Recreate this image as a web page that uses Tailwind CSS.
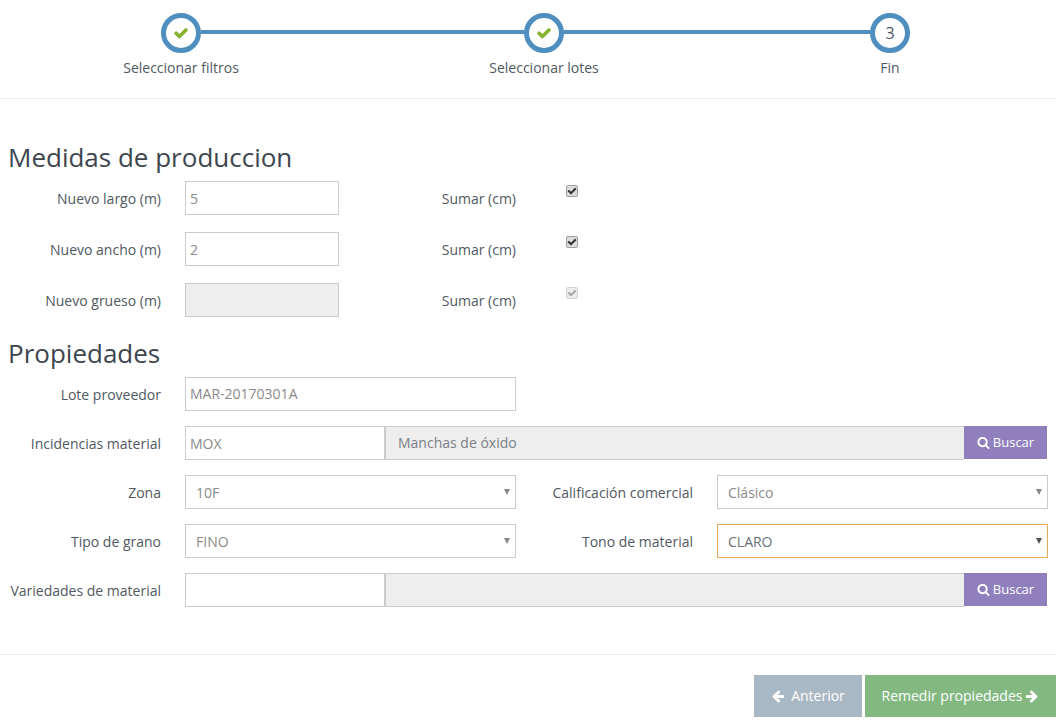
<!DOCTYPE html>
<html lang="es">
<head>
    <meta charset="UTF-8">
    <title>Remedir propiedades</title>
    <script src="https://cdn.jsdelivr.net/npm/@tailwindcss/browser@4"></script>
</head>
<body class="bg-white font-['Open_Sans',sans-serif] text-[14px] text-[#4f5962] overflow-hidden">
<div class="w-[1056px]">

    <!-- Stepper -->
    <div class="h-[99px] border-b border-[#eeeeee] flex items-start pl-[161px] pr-[146px] pt-[13px]">
        <div class="w-10 flex flex-col items-center shrink-0">
            <div class="w-10 h-10 rounded-full border-[5px] border-[#4f8fc0] flex items-center justify-center">
                <svg class="w-4 h-4" viewBox="0 0 1792 1792" fill="#85b22f"><path d="M1671 566q0 40-28 68l-724 724-136 136q-28 28-68 28t-68-28l-136-136-362-362q-28-28-28-68t28-68l136-136q28-28 68-28t68 28l294 295 656-657q28-28 68-28t68 28l136 136q28 28 28 68z"/></svg>
            </div>
            <span class="whitespace-nowrap mt-[5px] leading-[20px]">Seleccionar filtros</span>
        </div>
        <div class="w-[323px] h-1 bg-[#4f8fc0] mt-[17px]"></div>
        <div class="w-10 flex flex-col items-center shrink-0">
            <div class="w-10 h-10 rounded-full border-[5px] border-[#4f8fc0] flex items-center justify-center">
                <svg class="w-4 h-4" viewBox="0 0 1792 1792" fill="#85b22f"><path d="M1671 566q0 40-28 68l-724 724-136 136q-28 28-68 28t-68-28l-136-136-362-362q-28-28-28-68t28-68l136-136q28-28 68-28t68 28l294 295 656-657q28-28 68-28t68 28l136 136q28 28 28 68z"/></svg>
            </div>
            <span class="whitespace-nowrap mt-[5px] leading-[20px]">Seleccionar lotes</span>
        </div>
        <div class="flex-1 h-1 bg-[#4f8fc0] mt-[17px]"></div>
        <div class="w-10 flex flex-col items-center shrink-0">
            <div class="w-10 h-10 rounded-full border-[5px] border-[#4f8fc0] flex items-center justify-center text-[16px]">3</div>
            <span class="whitespace-nowrap mt-[5px] leading-[20px]">Fin</span>
        </div>
    </div>

    <!-- Form -->
    <div class="pt-[42px]">
        <h2 class="pl-2 text-[26px] leading-[33px] text-[#3d464e] mb-[7px]">Medidas de produccion</h2>

        <div class="flex items-start h-[34px] mb-[17px]">
            <label class="w-[161px] text-right leading-[36px]">Nuevo largo (m)</label>
            <input value="5" class="ml-6 w-[154px] h-[34px] border border-[#cccccc] px-[4px] text-[#8a8a8a] outline-none">
            <label class="w-[177px] text-right leading-[36px]">Sumar (cm)</label>
            <span class="ml-[50px] mt-1 w-3 h-3 rounded-[2px] border border-[#a0a0a0] bg-[#dcdcdc] flex items-center justify-center">
                <svg class="w-[10px] h-[10px]" viewBox="0 0 1792 1792" fill="#333"><path d="M1671 566q0 40-28 68l-724 724-136 136q-28 28-68 28t-68-28l-136-136-362-362q-28-28-28-68t28-68l136-136q28-28 68-28t68 28l294 295 656-657q28-28 68-28t68 28l136 136q28 28 28 68z"/></svg>
            </span>
        </div>
        <div class="flex items-start h-[34px] mb-[17px]">
            <label class="w-[161px] text-right leading-[36px]">Nuevo ancho (m)</label>
            <input value="2" class="ml-6 w-[154px] h-[34px] border border-[#cccccc] px-[4px] text-[#8a8a8a] outline-none">
            <label class="w-[177px] text-right leading-[36px]">Sumar (cm)</label>
            <span class="ml-[50px] mt-1 w-3 h-3 rounded-[2px] border border-[#a0a0a0] bg-[#dcdcdc] flex items-center justify-center">
                <svg class="w-[10px] h-[10px]" viewBox="0 0 1792 1792" fill="#333"><path d="M1671 566q0 40-28 68l-724 724-136 136q-28 28-68 28t-68-28l-136-136-362-362q-28-28-28-68t28-68l136-136q28-28 68-28t68 28l294 295 656-657q28-28 68-28t68 28l136 136q28 28 28 68z"/></svg>
            </span>
        </div>
        <div class="flex items-start h-[34px] mb-[17px]">
            <label class="w-[161px] text-right leading-[36px]">Nuevo grueso (m)</label>
            <input disabled class="ml-6 w-[154px] h-[34px] border border-[#cccccc] bg-[#eeeeee] px-[4px] outline-none">
            <label class="w-[177px] text-right leading-[36px]">Sumar (cm)</label>
            <span class="ml-[50px] mt-1 w-3 h-3 rounded-[2px] border border-[#d2d2d2] bg-[#eeeeee] flex items-center justify-center">
                <svg class="w-[10px] h-[10px]" viewBox="0 0 1792 1792" fill="#a8a8a8"><path d="M1671 566q0 40-28 68l-724 724-136 136q-28 28-68 28t-68-28l-136-136-362-362q-28-28-28-68t28-68l136-136q28-28 68-28t68 28l294 295 656-657q28-28 68-28t68 28l136 136q28 28 28 68z"/></svg>
            </span>
        </div>

        <h2 class="pl-2 mt-5 text-[26px] leading-[33px] text-[#3d464e] mb-[7px]">Propiedades</h2>

        <div class="flex items-start h-[34px] mb-[15px]">
            <label class="w-[161px] text-right leading-[35px]">Lote proveedor</label>
            <input value="MAR-20170301A" class="ml-6 w-[331px] h-[34px] border border-[#cccccc] px-[4px] pb-px text-[#8a8a8a] outline-none">
        </div>
        <div class="flex items-start h-[34px] mb-[15px]">
            <label class="w-[161px] text-right leading-[36px]">Incidencias material</label>
            <input value="MOX" class="ml-6 w-[199px] h-[34px] border border-[#cccccc] border-r-0 px-[4px] text-[#8a8a8a] outline-none">
            <div class="w-[580px] h-[34px] bg-[#eeeeee] border border-[#cccccc] border-l-2 border-r-0 pl-3 leading-[32px] text-[#7b8187]">Manchas de óxido</div>
            <button class="w-[83px] h-[33px] bg-[#8f7fbd] text-white text-[13px] flex items-center justify-center gap-[3px]">
                <svg class="w-[13px] h-[13px]" viewBox="0 0 1792 1792" fill="#fff"><path d="M1216 832q0-185-131.500-316.500t-316.500-131.500-316.500 131.500-131.500 316.500 131.500 316.500 316.500 131.500 316.500-131.500 131.500-316.500zm512 832q0 52-38 90t-90 38q-54 0-90-38l-343-342q-179 124-399 124-143 0-273.500-55.500t-225-150-150-225-55.500-273.500 55.500-273.500 150-225 225-150 273.500-55.500 273.500 55.500 225 150 150 225 55.500 273.500q0 220-124 399l343 343q37 37 37 90z"/></svg>
                Buscar
            </button>
        </div>
        <div class="flex items-start h-[34px] mb-[15px]">
            <label class="w-[161px] text-right leading-[36px]">Zona</label>
            <div class="relative ml-6 w-[331px] h-[34px] border border-[#cccccc] pl-[10px] leading-[33px] text-[#8a8a8a]">
                10F
                <span class="absolute right-[5px] top-[13px] border-x-[3px] border-t-[6px] border-x-transparent border-t-[#888888]"></span>
            </div>
            <label class="w-[177px] text-right leading-[36px]">Calificación comercial</label>
            <div class="relative ml-6 w-[331px] h-[34px] border border-[#cccccc] pl-[10px] leading-[33px] text-[#8a8a8a]">
                Clásico
                <span class="absolute right-[5px] top-[13px] border-x-[3px] border-t-[6px] border-x-transparent border-t-[#888888]"></span>
            </div>
        </div>
        <div class="flex items-start h-[34px] mb-[15px]">
            <label class="w-[161px] text-right leading-[36px]">Tipo de grano</label>
            <div class="relative ml-6 w-[331px] h-[34px] border border-[#cccccc] pl-[10px] leading-[33px] text-[#8a8a8a]">
                FINO
                <span class="absolute right-[5px] top-[13px] border-x-[3px] border-t-[6px] border-x-transparent border-t-[#888888]"></span>
            </div>
            <label class="w-[177px] text-right leading-[36px]">Tono de material</label>
            <div class="relative ml-6 w-[331px] h-[34px] border border-[#e8a85c] pl-[10px] leading-[33px] text-[#6a7076]">
                CLARO
                <span class="absolute right-[5px] top-[13px] border-x-[3px] border-t-[6px] border-x-transparent border-t-[#555555]"></span>
            </div>
        </div>
        <div class="flex items-start h-[34px]">
            <label class="w-[161px] text-right leading-[36px]">Variedades de material</label>
            <input class="ml-6 w-[199px] h-[34px] border border-[#cccccc] border-r-0 px-[4px] text-[#8a8a8a] outline-none">
            <div class="w-[580px] h-[34px] bg-[#eeeeee] border border-[#cccccc] border-l-2 border-r-0"></div>
            <button class="w-[83px] h-[33px] bg-[#8f7fbd] text-white text-[13px] flex items-center justify-center gap-[3px]">
                <svg class="w-[13px] h-[13px]" viewBox="0 0 1792 1792" fill="#fff"><path d="M1216 832q0-185-131.500-316.500t-316.500-131.500-316.500 131.500-131.500 316.500 131.500 316.500 316.500 131.500 316.500-131.500 131.500-316.500zm512 832q0 52-38 90t-90 38q-54 0-90-38l-343-342q-179 124-399 124-143 0-273.500-55.500t-225-150-150-225-55.500-273.500 55.500-273.500 150-225 225-150 273.500-55.500 273.500 55.500 225 150 150 225 55.500 273.500q0 220-124 399l343 343q37 37 37 90z"/></svg>
                Buscar
            </button>
        </div>
    </div>

    <!-- Footer buttons -->
    <div class="mt-[47px] border-t border-[#eeeeee] pt-5 flex justify-end gap-[3px]">
        <button class="w-[108px] h-[42px] pb-px bg-[#a9b8c5] text-white flex items-center justify-center gap-[6px]">
            <svg class="w-[14px] h-[14px]" viewBox="0 0 1792 1792" fill="#fff"><path d="M1664 896v128q0 53-32.500 90.500t-84.500 37.500h-704l293 294q38 36 38 90t-38 90l-75 76q-37 37-90 37-52 0-91-37l-651-652q-37-37-37-90 0-52 37-91l651-650q38-38 91-38 52 0 90 38l75 74q38 38 38 91t-38 91l-293 293h704q52 0 84.500 37.500t32.500 90.500z"/></svg>
            Anterior
        </button>
        <button class="w-[191px] h-[42px] pb-px bg-[#83b881] text-white flex items-center justify-center gap-[3px]">
            Remedir propiedades
            <svg class="w-[14px] h-[14px]" viewBox="0 0 1792 1792" fill="#fff"><path d="M1600 960q0 54-37 91l-651 651q-39 37-91 37-51 0-90-37l-75-75q-38-38-38-91t38-91l293-293h-704q-52 0-84.500-37.500t-32.500-90.500v-128q0-53 32.500-90.500t84.500-37.500h704l-293-294q-38-36-38-90t38-90l75-75q38-38 90-38 53 0 91 38l651 651q37 35 37 90z"/></svg>
        </button>
    </div>
</div>
</body>
</html>
